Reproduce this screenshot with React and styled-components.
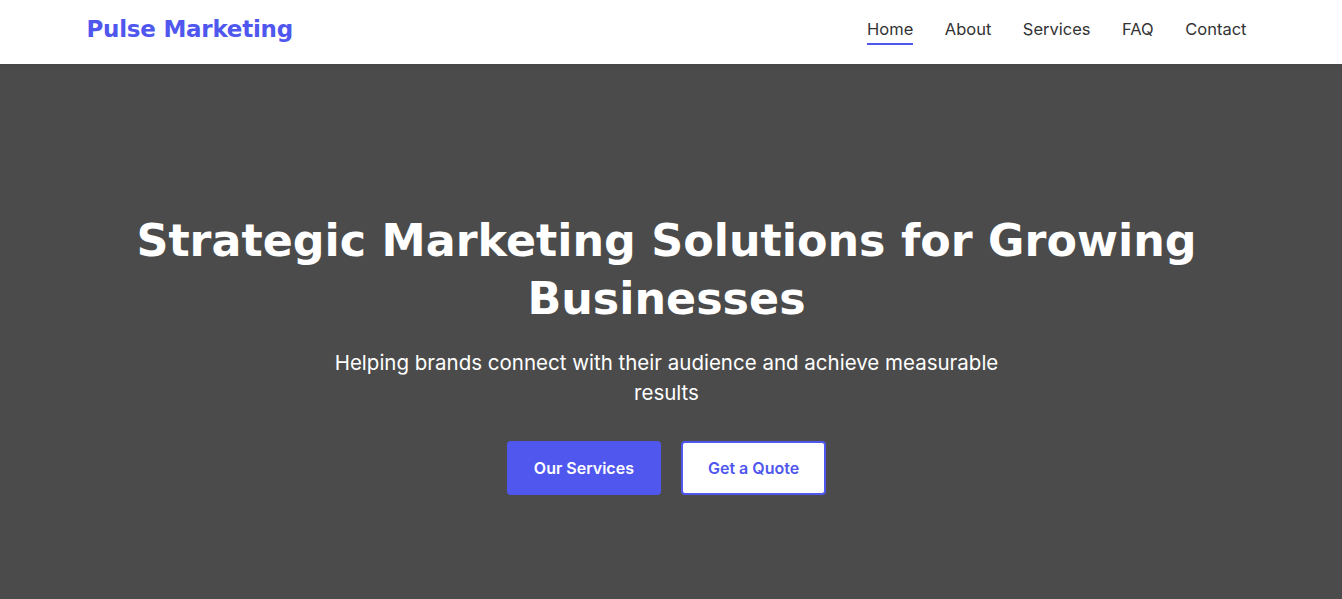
import React from "react";
import styled, { createGlobalStyle } from "styled-components";

const Global = createGlobalStyle`
  * { box-sizing: border-box; }
  html, body { margin: 0; padding: 0; }
  body {
    font-family: "Inter", "Noto Sans", sans-serif;
    background: #4b4b4b;
    color: #333;
  }
`;

const Header = styled.header`
  background: #fff;
  height: 64px;
  padding-right: 9px;
  box-shadow: 0 2px 6px rgba(0, 0, 0, 0.08);
  position: relative;
  z-index: 1;
`;

const HeaderInner = styled.div`
  max-width: 1200px;
  height: 100%;
  margin: 0 auto;
  padding: 0 20px 6px;
  display: flex;
  align-items: center;
  justify-content: space-between;
`;

const Logo = styled.a`
  font-family: "DejaVu Sans", sans-serif;
  font-weight: 700;
  font-size: 23px;
  color: #4f57ee;
  text-decoration: none;
  letter-spacing: -0.25px;
`;

const Nav = styled.nav`
  display: flex;
  gap: 31.5px;
`;

const NavLink = styled.a`
  font-family: "Inter", sans-serif;
  font-size: 16.5px;
  font-weight: 400;
  color: #333;
  text-decoration: none;
  position: relative;
  padding: 4px 0;
  &::after {
    content: "";
    position: absolute;
    left: 0;
    right: 0;
    bottom: -2px;
    height: 2px;
    background: #4f57ee;
    display: ${(p) => (p.$active ? "block" : "none")};
  }
`;

const Hero = styled.section`
  background: #4b4b4b;
  color: #fff;
  text-align: center;
  padding: 148px 29px 100px 20px;
  display: flex;
  flex-direction: column;
  align-items: center;
`;

const Title = styled.h1`
  font-family: "DejaVu Sans", sans-serif;
  font-weight: 700;
  font-size: 44.4px;
  line-height: 58px;
  margin: 0 0 20px;
  max-width: 1100px;
`;

const Subtitle = styled.p`
  font-family: "Inter", sans-serif;
  font-size: 20.5px;
  line-height: 30px;
  margin: 0 0 33px;
  max-width: 700px;
`;

const Actions = styled.div`
  display: flex;
  gap: 20px;
  justify-content: center;
`;

const Button = styled.a`
  font-family: "Inter", sans-serif;
  font-weight: 600;
  font-size: 16px;
  line-height: 24px;
  padding: 13px 25px;
  border-radius: 4px;
  border: 2px solid #4f57ee;
  text-decoration: none;
  background: ${(p) => (p.$outline ? "#fff" : "#4f57ee")};
  color: ${(p) => (p.$outline ? "#4f57ee" : "#fff")};
`;

export default function App() {
  return (
    <>
      <Global />
      <Header>
        <HeaderInner>
          <Logo href="#">Pulse Marketing</Logo>
          <Nav>
            <NavLink href="#" $active>Home</NavLink>
            <NavLink href="#">About</NavLink>
            <NavLink href="#">Services</NavLink>
            <NavLink href="#">FAQ</NavLink>
            <NavLink href="#">Contact</NavLink>
          </Nav>
        </HeaderInner>
      </Header>
      <Hero>
        <Title>Strategic Marketing Solutions for Growing Businesses</Title>
        <Subtitle>Helping brands connect with their audience and achieve measurable results</Subtitle>
        <Actions>
          <Button href="#">Our Services</Button>
          <Button href="#" $outline>Get a Quote</Button>
        </Actions>
      </Hero>
    </>
  );
}
